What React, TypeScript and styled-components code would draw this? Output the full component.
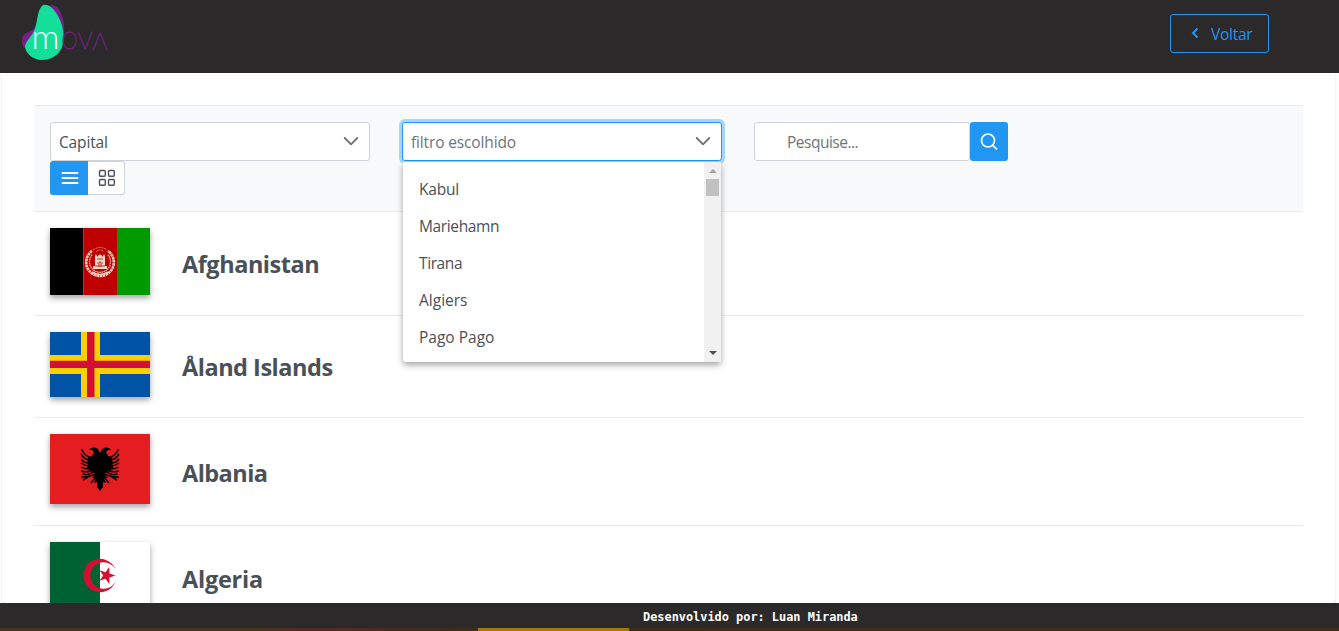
import React from "react";
import styled, { createGlobalStyle } from "styled-components";

const Global = createGlobalStyle`
  * { box-sizing: border-box; }
  body { margin: 0; background: #fff; overflow: hidden; }
`;

const Page = styled.div`
  height: 631px;
  display: flex;
  flex-direction: column;
  overflow: hidden;
  background: #fff;
  color: #495057;
  font: 400 15.5px/21px "Open Sans", "Noto Sans", sans-serif;
`;

const Header = styled.header`
  flex: 0 0 73px;
  display: flex;
  align-items: flex-start;
  justify-content: space-between;
  padding: 0 70px 0 20px;
  background: #2b2929;
`;

const BackButton = styled.button`
  display: flex;
  align-items: center;
  width: 99px;
  height: 39px;
  margin-top: 14px;
  padding: 2px 0 0 20px;
  gap: 12px;
  border: 1px solid #2196f3;
  border-radius: 3px;
  background: transparent;
  color: #2196f3;
  font: inherit;
  svg { margin-top: -4px; }
`;

const Main = styled.main`
  flex: 1;
  min-height: 0;
  overflow: hidden;
  margin: 0 4px 0 2px;
  padding: 32px;
  border-radius: 4px;
  box-shadow: 0 1px 3px rgba(0, 0, 0, 0.14);
`;

const Toolbar = styled.section`
  height: 107px;
  padding: 16px;
  border: solid #e9ecef;
  border-width: 1px 0;
  background: #f8f9fb;
`;

const Filters = styled.div`
  display: flex;
  gap: 32px;
`;

const SelectBox = styled.div<{ $focused?: boolean }>`
  position: relative;
  display: flex;
  align-items: center;
  justify-content: space-between;
  width: 320px;
  height: 39px;
  padding: 2px 10px 0 8px;
  border: 1px solid ${(p) => (p.$focused ? "#2196f3" : "#ced4da")};
  border-radius: 3px;
  background: #fff;
  color: ${(p) => (p.$focused ? "#6c757d" : "#495057")};
  box-shadow: ${(p) => (p.$focused ? "0 0 0 3px #a6d5fa" : "none")};
  svg { margin-top: -4px; }
`;

const Text = styled.span<{ $track?: number }>`
  letter-spacing: ${(p) => p.$track ?? 0}px;
  white-space: nowrap;
`;

const Panel = styled.div`
  position: absolute;
  z-index: 2;
  top: 39px;
  left: 0;
  display: flex;
  width: 318px;
  height: 200px;
  border-radius: 0 0 3px 3px;
  background: #fff;
  color: #495057;
  box-shadow: 0 3px 6px rgba(0, 0, 0, 0.36);
`;

const Options = styled.ul`
  flex: 1;
  margin: 0;
  padding: 9px 0 0;
  list-style: none;
`;

const Option = styled.li`
  height: 37px;
  padding: 8px 16px;
`;

const Scrollbar = styled.div`
  display: flex;
  flex-direction: column;
  align-items: center;
  justify-content: space-between;
  width: 17px;
  padding: 7px 0;
  background: #f1f1f1;
`;

const Arrow = styled.i<{ $down?: boolean }>`
  border: solid transparent;
  border-width: 0 4px;
  ${(p) => (p.$down ? "border-top: 4px solid #505050;" : "border-bottom: 4px solid #a3a3a3;")}
`;

const Thumb = styled.div`
  width: 13px;
  height: 17px;
  margin: 6px 0 auto;
  background: #c1c1c1;
`;

const Search = styled.div`
  display: flex;
`;

const SearchInput = styled.div`
  width: 216px;
  height: 39px;
  padding: 9px 32px 0;
  border: 1px solid #ced4da;
  border-radius: 3px;
  background: #fff;
  color: #6c757d;
`;

const SearchButton = styled.button`
  display: grid;
  place-items: center;
  width: 38px;
  height: 39px;
  padding: 0;
  border: 0;
  border-radius: 3px;
  background: #2196f3;
`;

const Views = styled.div`
  display: flex;
`;

const ViewButton = styled.button<{ $active?: boolean }>`
  display: grid;
  place-items: center;
  width: ${(p) => (p.$active ? 38 : 37)}px;
  height: 34px;
  padding: 0 0 0 1px;
  border: ${(p) => (p.$active ? "0" : "1px solid #ced4da")};
  border-left: 0;
  border-radius: ${(p) => (p.$active ? "3px 0 0 3px" : "0 3px 3px 0")};
  background: ${(p) => (p.$active ? "#2196f3" : "#fff")};
`;

const Row = styled.article<{ $height: number }>`
  display: flex;
  align-items: flex-start;
  height: ${(p) => p.$height}px;
  padding: 16px;
  border-bottom: 1px solid #e9ecef;
`;

const Flag = styled.svg`
  flex: none;
  display: block;
  width: 100px;
  box-shadow: 0 3px 6px rgba(0, 0, 0, 0.36);
`;

const Name = styled.h2<{ $top: number; $track: number }>`
  margin: ${(p) => p.$top}px 0 0 32px;
  font: 700 23.5px/32px "Open Sans", "Noto Sans", sans-serif;
  letter-spacing: ${(p) => p.$track}px;
`;

const Footer = styled.footer`
  flex: 0 0 25px;
  min-height: 0;
  padding-left: 643px;
  background: #2b2929;
  color: #fff;
  font: 700 11.9px/28px "DejaVu Sans Mono", monospace;
  white-space: nowrap;
`;

const Strip = styled.div`
  flex: 0 0 3px;
  padding-left: 478px;
  background: linear-gradient(90deg, #493019, #493019 17%, #493116 19%, #552a20 22%, #552a20 25%, #3f2c17 34%, #432d19);
`;

const StripThumb = styled.div`
  width: 151px;
  height: 3px;
  background: #a87507;
`;

const Logo = () => (
  <svg width="92" height="66" viewBox="20 0 92 66">
    <path d="M47 7C52 4 57 5 60 11C64 19 66 28 62 38L34 51L24 48C22 44 21 39 23 36C27 31 34 31 37 25C40 18 41 10 47 7Z" fill="#742183" />
    <path d="M43 5C49 4 54 9 58 16C64 27 65 39 62 47C59 55 51 60 42 60C33 60 25 53 25 46C26 41 31 37 34 31C38 22 37 9 43 5Z" fill="#13df9a" />
    <g fontFamily="Lato" fontWeight="300">
      <text x="31.500" y="49" fontSize="33" textLength="28" lengthAdjust="spacingAndGlyphs" fill="#fff">m</text>
      <g fill="#742183" fontSize="23" fontWeight="100" stroke="#742183" strokeWidth=".8">
        <text x="61.500" y="49" textLength="16" lengthAdjust="spacingAndGlyphs">O</text>
        <text x="77.500" y="49" textLength="15" lengthAdjust="spacingAndGlyphs">V</text>
        <text x="-107.500" y="-32.500" transform="rotate(180)" textLength="15" lengthAdjust="spacingAndGlyphs">V</text>
      </g>
    </g>
  </svg>
);

const Chevron = () => (
  <svg width="16" height="16" viewBox="0 0 16 16" fill="none" stroke="#6c757d" strokeWidth="1.9" strokeLinecap="round" strokeLinejoin="round">
    <path d="M1.700 5L8 11.300L14.300 5" />
  </svg>
);

const Afghanistan = () => (
  <Flag height="67" viewBox="0 0 100 67">
    <path fill="#000" d="M0 0H33.300V67H0Z" />
    <path fill="#be0000" d="M33.300 0H67V67H33.300Z" />
    <path fill="#009900" d="M67 0H100V67H67Z" />
    <g fill="none" stroke="#efcdbd">
      <path d="M42 23A13.800 13.800 0 1 0 58 23" strokeWidth="2.600" strokeDasharray="2.600 .5" />
      <path d="M42 27A10.500 10.500 0 1 0 58 27" strokeWidth="1.200" strokeDasharray="1.500 .6" />
      <path d="M43 22Q50 17 57 22M46 24Q50 20 54 24" strokeWidth="1" strokeDasharray="2 1" opacity=".65" />
      <path d="M42 44Q50 49 58 44" strokeWidth="1.700" />
    </g>
    <path d="M43 41V38H45V28L46 26L47 28V29Q50 24 53 29V28L54 26L55 28V38H57V41Z" fill="#f2d6c9" />
    <path d="M47 31H53M47 35H48M52 35H53M49 39V34H51V39M45 38H55" stroke="#be3420" strokeWidth="1" fill="none" />
  </Flag>
);

const Aland = () => (
  <Flag height="65" viewBox="0 0 100 65">
    <path fill="#0053a5" d="M0 0H100V65H0Z" />
    <path fill="#ffce00" d="M31 0H50V65H31ZM0 23H100V42H0Z" />
    <path fill="#d21034" d="M37 0H44.500V65H37ZM0 28.800H100V36H0Z" />
  </Flag>
);

const EagleHalf = () => (
  <>
    <path d="M50 19L48 15L45 13.500L41 14L39 16L42 16L44 18L42 22L38 23L37 34L42 38L46 40L42 44L46 44L44 49L47 48L47 53L50 57Z" />
    <path d="M39 23Q34 21 31.500 15M39 26Q34 25 31 20M39 29Q34 29 31 25M40 32Q35 32 31 29M41 34Q36 36 31.500 33M42 36Q37 39 31.500 37M43 38Q38 42 32.500 40M46 40L37 43L31 43M38 43L33 46M47 42L41 49" fill="none" stroke="#000" strokeWidth="1.500" />
  </>
);

const Albania = () => (
  <Flag height="70" viewBox="0 0 100 70">
    <path fill="#e41e20" d="M0 0H100V70H0Z" />
    <EagleHalf />
    <g transform="matrix(-1 0 0 1 100 0)"><EagleHalf /></g>
  </Flag>
);

const Algeria = () => (
  <Flag height="67" viewBox="0 0 100 67">
    <path fill="#006233" d="M0 0H50V67H0Z" />
    <path fill="#fff" d="M50 0H100V67H50Z" />
    <path fill="#d21034" d="M66 28.500A16.700 16.700 0 1 0 66 38.500A13.300 13.300 0 1 1 66 28.500ZM65.500 33.500L59.500 35.500L59.300 42L55.500 36.800L49.500 38.700L53.200 33.500L49.500 28.300L55.500 30.200L59.300 25L59.500 31.500Z" />
  </Flag>
);

const countries = [
  { name: "Afghanistan", height: 104, top: 20, track: -0.47, flag: <Afghanistan /> },
  { name: "Åland Islands", height: 102, top: 19, track: -0.48, flag: <Aland /> },
  { name: "Albania", height: 108, top: 23, track: -0.55, flag: <Albania /> },
  { name: "Algeria", height: 106, top: 21, track: -0.25, flag: <Algeria /> },
];

const capitals = [
  { name: "Kabul", track: -0.2 },
  { name: "Mariehamn", track: -0.36 },
  { name: "Tirana", track: -0.4 },
  { name: "Algiers", track: 0 },
  { name: "Pago Pago", track: 0 },
];

export default function App() {
  return (
    <Page>
      <Global />
      <Header>
        <Logo />
        <BackButton>
          <svg width="8" height="12" viewBox="0 0 8 12" fill="none" stroke="#2196f3" strokeWidth="2"><path d="M6.500 1.500L2 6L6.500 10.500" /></svg>
          <Text $track={-0.25}>Voltar</Text>
        </BackButton>
      </Header>
      <Main>
        <Toolbar>
          <Filters>
            <SelectBox>
              <Text $track={-0.15}>Capital</Text>
              <Chevron />
            </SelectBox>
            <SelectBox $focused>
              <Text $track={-0.14}>filtro escolhido</Text>
              <Chevron />
              <Panel>
                <Options>
                  {capitals.map((c) => (
                    <Option key={c.name}><Text $track={c.track}>{c.name}</Text></Option>
                  ))}
                </Options>
                <Scrollbar><Arrow /><Thumb /><Arrow $down /></Scrollbar>
              </Panel>
            </SelectBox>
            <Search>
              <SearchInput><Text $track={-0.5}>Pesquise...</Text></SearchInput>
              <SearchButton>
                <svg width="18" height="18" viewBox="0 0 18 18" fill="none" stroke="#fff" strokeWidth="1.700" strokeLinecap="round"><circle cx="8" cy="7.500" r="6.500" /><path d="M12.700 12.300L16.500 16" /></svg>
              </SearchButton>
            </Search>
          </Filters>
          <Views>
            <ViewButton $active>
              <svg width="18" height="14" viewBox="0 0 18 14" stroke="#fff" strokeWidth="1.900" strokeLinecap="round"><path d="M1.500 2H16.500M1.500 7H16.500M1.500 12H16.500" /></svg>
            </ViewButton>
            <ViewButton>
              <svg width="18" height="18" viewBox="0 0 18 18" fill="none" stroke="#495057" strokeWidth="1.400"><rect x="1.500" y="1.500" width="5.800" height="5.800" rx="1" /><rect x="10.500" y="1.500" width="5.800" height="5.800" rx="1" /><rect x="1.500" y="10.500" width="5.800" height="5.800" rx="1" /><rect x="10.500" y="10.500" width="5.800" height="5.800" rx="1" /></svg>
            </ViewButton>
          </Views>
        </Toolbar>
        {countries.map((c) => (
          <Row key={c.name} $height={c.height}>
            {c.flag}
            <Name $top={c.top} $track={c.track}>{c.name}</Name>
          </Row>
        ))}
      </Main>
      <Footer>Desenvolvido por: Luan Miranda</Footer>
      <Strip><StripThumb /></Strip>
    </Page>
  );
}
